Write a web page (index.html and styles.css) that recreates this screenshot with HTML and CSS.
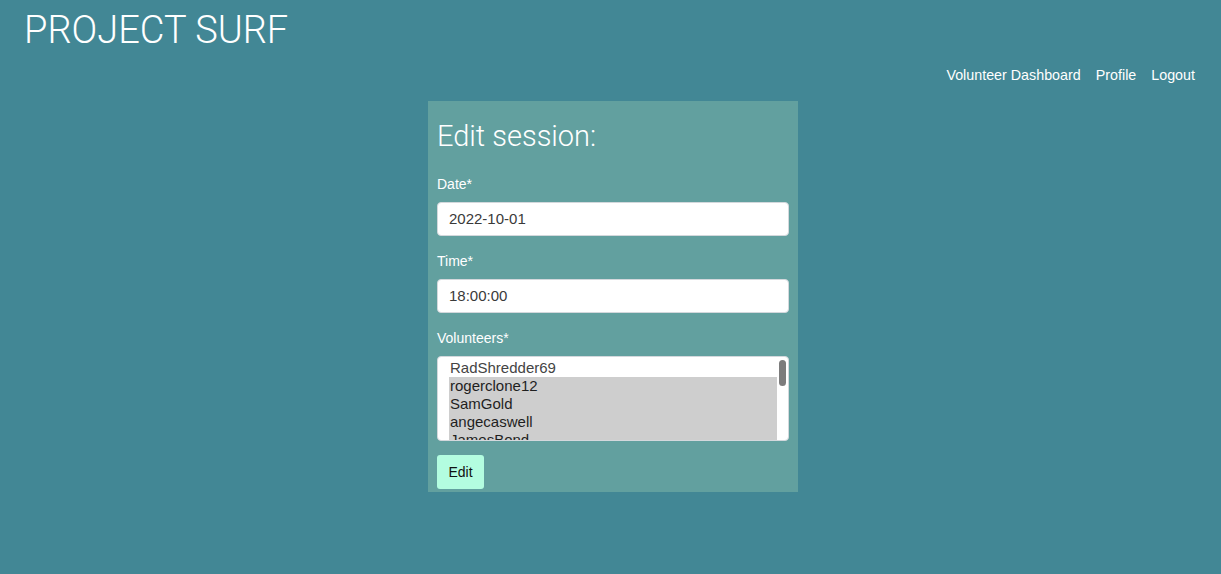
FILE: index.html
```html
<!DOCTYPE html>
<html lang="en">
<head>
<meta charset="utf-8">
<title>Project Surf - Edit session</title>
<link rel="stylesheet" href="styles.css">
</head>
<body>
<header class="site-header">
  <h1 class="brand">PROJECT SURF</h1>
  <nav class="nav">
    <a href="#" class="nav-link">Volunteer Dashboard</a>
    <a href="#" class="nav-link">Profile</a>
    <a href="#" class="nav-link">Logout</a>
  </nav>
</header>
<main class="main">
  <form class="card">
    <h2 class="card-title">Edit session:</h2>
    <div class="field">
      <label class="label">Date*</label>
      <div class="input">2022-10-01</div>
    </div>
    <div class="field">
      <label class="label">Time*</label>
      <div class="input">18:00:00</div>
    </div>
    <div class="field">
      <label class="label">Volunteers*</label>
      <div class="listbox">
        <div class="option">RadShredder69</div>
        <div class="option selected">rogerclone12</div>
        <div class="option selected">SamGold</div>
        <div class="option selected">angecaswell</div>
        <div class="option selected">JamesBond</div>
        <div class="thumb"></div>
      </div>
    </div>
    <button type="button" class="btn">Edit</button>
  </form>
</main>
</body>
</html>
```

FILE: styles.css
```css
* { box-sizing: border-box; }
html, body {
  margin: 0;
  padding: 0;
  background: #428795;
  height: 100%;
}
body {
  font-family: "Liberation Sans", Arial, sans-serif;
  color: #fff;
}
.site-header {
  display: flex;
  flex-direction: column;
}
.brand {
  margin: 0;
  padding: 8px 0 0 24px;
  font-family: Roboto, "Liberation Sans", sans-serif;
  font-weight: 300;
  font-size: 38px;
  line-height: 44px;
  color: #fff;
}
.nav {
  display: flex;
  justify-content: flex-end;
  gap: 15px;
  padding: 15px 26px 0 0;
}
.nav-link {
  color: #fff;
  text-decoration: none;
  font-size: 14.3px;
  line-height: 17px;
}
.main {
  display: flex;
  justify-content: center;
  padding: 17px 0 0 5px;
}
.card {
  width: 370px;
  background: #62a09f;
  padding: 18px 9px 3px;
  margin: 0;
}
.card-title {
  margin: 0 0 22px;
  font-family: Roboto, "Liberation Sans", sans-serif;
  font-weight: 300;
  font-size: 29px;
  line-height: 35px;
  color: #fff;
}
.field {
  display: flex;
  flex-direction: column;
  margin-bottom: 17px;
}
.label {
  font-size: 14px;
  line-height: 17px;
  margin-bottom: 9px;
  color: #fff;
}
.input {
  height: 34px;
  background: #fff;
  border: 1px solid #d3d8dc;
  border-radius: 4px;
  padding: 0 11px;
  font-size: 15px;
  line-height: 32px;
  color: #3a3a3a;
}
.listbox {
  position: relative;
  height: 85px;
  background: #fff;
  border: 1px solid #d3d8dc;
  border-radius: 4px;
  padding: 2px 12px 0 11px;
  overflow: hidden;
}
.option {
  font-size: 15px;
  line-height: 18px;
  color: #444;
  padding-left: 1px;
  margin-right: -1px;
}
.option.selected {
  background: #cecece;
  color: #1f1f1f;
}
.thumb {
  position: absolute;
  top: 3px;
  right: 2px;
  width: 7px;
  height: 26px;
  border-radius: 4px;
  background: #7c7c7c;
}
.field:last-of-type {
  margin-bottom: 14px;
}
.btn {
  display: block;
  width: 47px;
  height: 34px;
  padding: 0;
  border: none;
  border-radius: 3px;
  background: #b3fde0;
  color: #111;
  font-family: "Liberation Sans", Arial, sans-serif;
  font-size: 14px;
}
```
